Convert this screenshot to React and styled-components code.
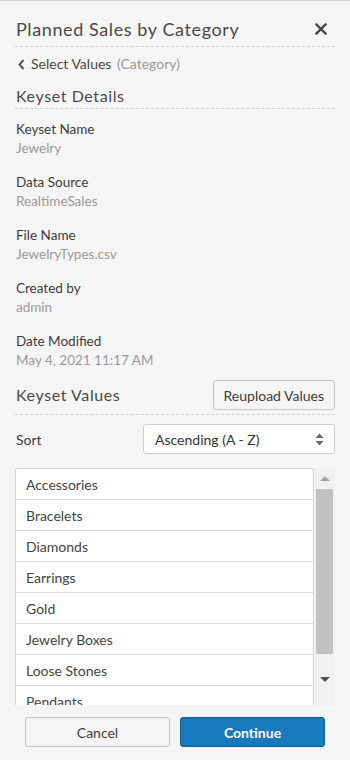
import React from 'react';
import styled, { createGlobalStyle } from 'styled-components';

const Global = createGlobalStyle`
  * { box-sizing: border-box; }
  body {
    margin: 0;
    background: #f5f5f5;
    font-family: 'Lato', 'Open Sans', sans-serif;
    color: #444;
  }
`

const Panel = styled.div`
  height: 760px;
  border-top: 1px solid #d2d2d2;
  display: flex;
  flex-direction: column;
  background: #f5f5f5;
`
const Body = styled.div`
  flex: 1;
  padding: 0 15px;
  display: flex;
  flex-direction: column;
`
const Header = styled.div`
  display: flex;
  align-items: center;
  justify-content: space-between;
  padding: 17px 0 6px 1px;
  border-bottom: 1px dashed #cfcfcf;
`
const Title = styled.h1`
  margin: 0;
  font-size: 18px;
  line-height: 22px;
  font-weight: 400;
  letter-spacing: 0.6px;
  color: #4a4a4a;
`
const CloseBtn = styled.button`
  border: none;
  background: none;
  padding: 0;
  margin-right: 8px;
  width: 12px;
  height: 12px;
  display: flex;
  cursor: pointer;
`
const BackLink = styled.a`
  display: flex;
  align-items: center;
  gap: 6px;
  margin-top: 7px;
  font-size: 14px;
  line-height: 20px;
  color: #4a4a4a;
  padding-left: 3px;
`
const Muted = styled.span`
  color: #999;
  margin-left: 2px;
`
const SectionHead = styled.div`
  display: flex;
  align-items: ${p => p.$center ? 'center' : 'flex-end'};
  justify-content: space-between;
  margin-top: ${p => p.$top}px;
  padding: 0 0 ${p => p.$pad}px 1px;
  border-bottom: 1px dashed #cfcfcf;
`
const SectionTitle = styled.h2`
  margin: 0;
  font-size: 16px;
  line-height: 22px;
  font-weight: 400;
  letter-spacing: 0.6px;
  color: #4a4a4a;
`
const Details = styled.dl`
  margin: 11px 0 0;
  padding-left: 1px;
`
const Field = styled.div`
  margin-bottom: 15px;
  &:last-child { margin-bottom: 0; }
`
const Label = styled.dt`
  font-size: 13.5px;
  line-height: 19px;
  color: #3d3d3d;
`
const Value = styled.dd`
  margin: 0;
  font-size: 13.5px;
  line-height: 19px;
  color: #9a9a9a;
`
const Button = styled.button`
  font-family: inherit;
  font-size: 14px;
  height: ${p => p.$h || 30}px;
  padding: 0 10px;
  border-radius: 3px;
  cursor: pointer;
  border: 1px solid ${p => p.$primary ? '#0e5d93' : '#c4c4c4'};
  background: ${p => p.$primary ? '#177abe' : '#f5f5f5'};
  color: ${p => p.$primary ? '#fff' : '#3d3d3d'};
  font-weight: ${p => p.$primary ? 700 : 400};
`
const SortRow = styled.div`
  display: flex;
  align-items: center;
  justify-content: space-between;
  margin-top: 9px;
  padding-left: 1px;
  font-size: 14px;
  color: #3d3d3d;
`
const Select = styled.div`
  width: 192px;
  height: 30px;
  border: 1px solid #cfcfcf;
  border-radius: 3px;
  background: #fff;
  display: flex;
  align-items: center;
  justify-content: space-between;
  padding: 0 10px 0 11px;
  font-size: 14px;
  color: #333;
`
const ListWrap = styled.div`
  margin-top: 14px;
  height: 237px;
  display: flex;
`
const List = styled.ul`
  flex: 1;
  margin: 0;
  padding: 0;
  list-style: none;
  overflow: hidden;
  background: #fff;
  border: 1px solid #d6d6d6;
  border-bottom: none;
  border-radius: 3px 3px 0 0;
`
const Row = styled.li`
  height: 31px;
  display: flex;
  align-items: center;
  padding-left: 10px;
  border-bottom: 1px solid #dcdcdc;
  font-size: 14px;
  color: #444;
`
const Scrollbar = styled.div`
  width: 21px;
  background: #f1f1f1;
  display: flex;
  flex-direction: column;
  align-items: center;
  padding: 0 2px;
`
const Arrow = styled.div`
  height: ${p => p.$h}px;
  display: flex;
  align-items: center;
  justify-content: center;
  &::after {
    content: '';
    border-left: 5px solid transparent;
    border-right: 5px solid transparent;
    ${p => p.$up ? 'border-bottom: 5px solid #a3a3a3;' : 'border-top: 5px solid #505050;'}
  }
`
const Thumb = styled.div`
  align-self: stretch;
  height: 165px;
  background: #c1c1c1;
`
const Footer = styled.div`
  display: flex;
  gap: 10px;
  padding: 11px 25px 13px;
  & > button { flex: 1; }
`

const fields = [
  ['Keyset Name', 'Jewelry'],
  ['Data Source', 'RealtimeSales'],
  ['File Name', 'JewelryTypes.csv'],
  ['Created by', 'admin'],
  ['Date Modified', 'May 4, 2021 11:17 AM'],
]

const values = ['Accessories', 'Bracelets', 'Diamonds', 'Earrings', 'Gold', 'Jewelry Boxes', 'Loose Stones', 'Pendants', 'Rings']

const App = () => {
  return (
    <Panel>
      <Global />
      <Body>
        <Header>
          <Title>Planned Sales by Category</Title>
          <CloseBtn aria-label="Close">
            <svg width="12" height="12" viewBox="0 0 12 12">
              <path d="M1.5 1.5 L10.5 10.5 M10.5 1.5 L1.5 10.5" stroke="#444" strokeWidth="2.4" strokeLinecap="square" />
            </svg>
          </CloseBtn>
        </Header>
        <BackLink>
          <svg width="7" height="11" viewBox="0 0 7 11">
            <path d="M5.5 1 L1.5 5.5 L5.5 10" stroke="#555" strokeWidth="2" fill="none" />
          </svg>
          <span>Select Values<Muted> (Category)</Muted></span>
        </BackLink>
        <SectionHead $top={11} $pad={1}>
          <SectionTitle>Keyset Details</SectionTitle>
        </SectionHead>
        <Details>
          {fields.map(([k, v]) => (
            <Field key={k}>
              <Label>{k}</Label>
              <Value>{v}</Value>
            </Field>
          ))}
        </Details>
        <SectionHead $top={10} $pad={4} $center>
          <SectionTitle>Keyset Values</SectionTitle>
          <Button $h={30}>Reupload Values</Button>
        </SectionHead>
        <SortRow>
          <span>Sort</span>
          <Select>
            <span>Ascending (A - Z)</span>
            <svg width="9" height="13" viewBox="0 0 9 13">
              <path d="M4.5 0.5 L8.5 5 L0.5 5 Z M4.5 12.5 L8.5 8 L0.5 8 Z" fill="#5b6b7a" />
            </svg>
          </Select>
        </SortRow>
        <ListWrap>
          <List>
            {values.map(v => <Row key={v}>{v}</Row>)}
          </List>
          <Scrollbar>
            <Arrow $up $h={21} />
            <Thumb />
            <Arrow $h={51} />
          </Scrollbar>
        </ListWrap>
      </Body>
      <Footer>
        <Button>Cancel</Button>
        <Button $primary>Continue</Button>
      </Footer>
    </Panel>
  )
}

export default App;
